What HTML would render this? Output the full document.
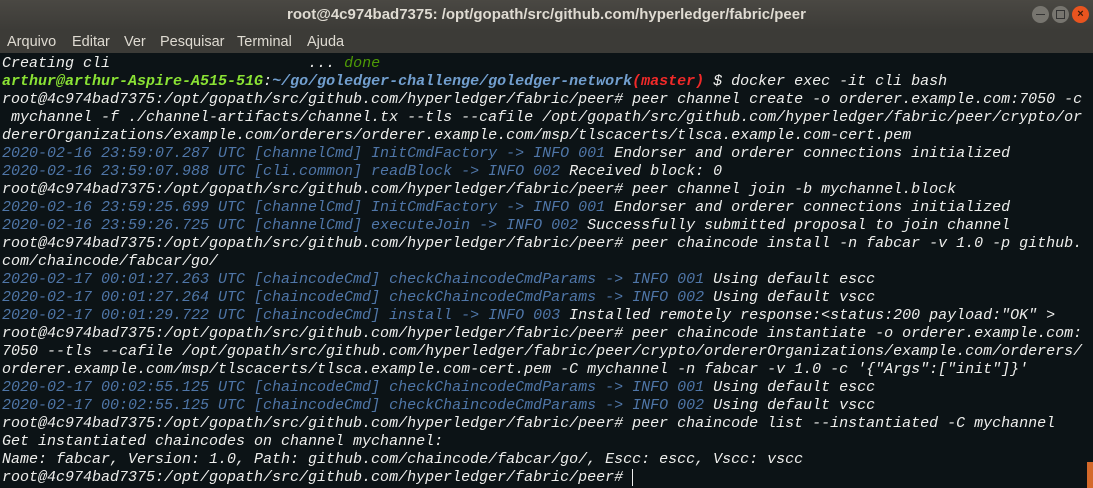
<!DOCTYPE html>
<html><head><meta charset="utf-8"><style>
body{margin:0;width:1093px;height:488px;overflow:hidden;background:#0c1316;font-family:"Liberation Mono","DejaVu Sans Mono",monospace;}
.title{position:absolute;left:0;top:0;width:1093px;height:30px;background:linear-gradient(#4a4843,#3c3b37);color:#dfdbd2;font:bold 15px "Liberation Sans","DejaVu Sans",sans-serif;text-align:center;line-height:29px;}
.menu{position:absolute;left:0;top:30px;width:1093px;height:23px;background:#3c3b37;color:#dfdbd2;font:14.5px "Liberation Sans","DejaVu Sans",sans-serif;line-height:25px;}
.menu span{position:absolute;top:0}
.btn{position:absolute;top:6px;width:17px;height:17px;border-radius:50%;background:#77756f;}
pre{position:absolute;left:2px;top:55px;margin:0;font-size:15px;line-height:18px;font-style:italic;color:#eeeeec;font-family:"Liberation Mono","DejaVu Sans Mono",monospace;letter-spacing:0}
.b{color:#4f76a8}.g{color:#8ae234;font-weight:bold}.d{color:#4e9a06}.r{color:#ef2929;font-weight:bold}.p{color:#729fcf;font-weight:bold}
</style></head><body>
<div class="title">root@4c974bad7375: /opt/gopath/src/github.com/hyperledger/fabric/peer</div>
<div class="btn" style="left:1032px"><div style="position:absolute;left:4px;top:8px;width:9px;height:1px;background:#333"></div></div>
<div class="btn" style="left:1052px"><div style="position:absolute;left:4px;top:4px;width:7px;height:7px;border:1px solid #333"></div></div>
<div class="btn" style="left:1072px;background:#e9541f;color:#3a1a0a;font:bold 11px sans-serif;text-align:center;line-height:17px">×</div>
<div class="menu"><span style="left:7px">Arquivo</span><span style="left:72px">Editar</span><span style="left:124px">Ver</span><span style="left:160px">Pesquisar</span><span style="left:237px">Terminal</span><span style="left:307px">Ajuda</span></div>
<pre>Creating cli                      ... <span class="d">done</span>
<span class="g">arthur@arthur-Aspire-A515-51G</span>:<span class="p">~/go/goledger-challenge/goledger-network</span><span class="r">(master)</span> $ docker exec -it cli bash
root@4c974bad7375:/opt/gopath/src/github.com/hyperledger/fabric/peer# peer channel create -o orderer.example.com:7050 -c
 mychannel -f ./channel-artifacts/channel.tx --tls --cafile /opt/gopath/src/github.com/hyperledger/fabric/peer/crypto/or
dererOrganizations/example.com/orderers/orderer.example.com/msp/tlscacerts/tlsca.example.com-cert.pem
<span class="b">2020-02-16 23:59:07.287 UTC [channelCmd] InitCmdFactory -> INFO 001</span> Endorser and orderer connections initialized
<span class="b">2020-02-16 23:59:07.988 UTC [cli.common] readBlock -> INFO 002</span> Received block: 0
root@4c974bad7375:/opt/gopath/src/github.com/hyperledger/fabric/peer# peer channel join -b mychannel.block
<span class="b">2020-02-16 23:59:25.699 UTC [channelCmd] InitCmdFactory -> INFO 001</span> Endorser and orderer connections initialized
<span class="b">2020-02-16 23:59:26.725 UTC [channelCmd] executeJoin -> INFO 002</span> Successfully submitted proposal to join channel
root@4c974bad7375:/opt/gopath/src/github.com/hyperledger/fabric/peer# peer chaincode install -n fabcar -v 1.0 -p github.
com/chaincode/fabcar/go/
<span class="b">2020-02-17 00:01:27.263 UTC [chaincodeCmd] checkChaincodeCmdParams -> INFO 001</span> Using default escc
<span class="b">2020-02-17 00:01:27.264 UTC [chaincodeCmd] checkChaincodeCmdParams -> INFO 002</span> Using default vscc
<span class="b">2020-02-17 00:01:29.722 UTC [chaincodeCmd] install -> INFO 003</span> Installed remotely response:&lt;status:200 payload:"OK" &gt;
root@4c974bad7375:/opt/gopath/src/github.com/hyperledger/fabric/peer# peer chaincode instantiate -o orderer.example.com:
7050 --tls --cafile /opt/gopath/src/github.com/hyperledger/fabric/peer/crypto/ordererOrganizations/example.com/orderers/
orderer.example.com/msp/tlscacerts/tlsca.example.com-cert.pem -C mychannel -n fabcar -v 1.0 -c '{"Args":["init"]}'
<span class="b">2020-02-17 00:02:55.125 UTC [chaincodeCmd] checkChaincodeCmdParams -> INFO 001</span> Using default escc
<span class="b">2020-02-17 00:02:55.125 UTC [chaincodeCmd] checkChaincodeCmdParams -> INFO 002</span> Using default vscc
root@4c974bad7375:/opt/gopath/src/github.com/hyperledger/fabric/peer# peer chaincode list --instantiated -C mychannel
Get instantiated chaincodes on channel mychannel:
Name: fabcar, Version: 1.0, Path: github.com/chaincode/fabcar/go/, Escc: escc, Vscc: vscc
root@4c974bad7375:/opt/gopath/src/github.com/hyperledger/fabric/peer# <span style="border-left:1px solid #eee;font-style:normal"> </span></pre>
<div style="position:absolute;left:1087px;top:462px;width:6px;height:26px;background:#d4692a"></div>
</body></html>
